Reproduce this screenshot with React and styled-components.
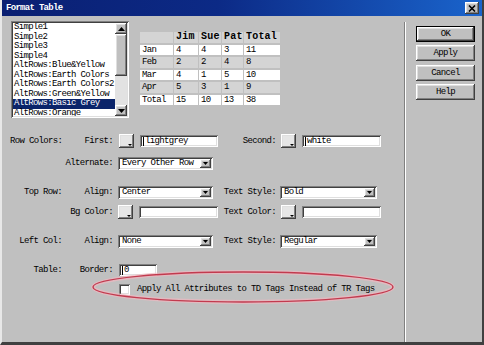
import React from 'react';
import styled, { createGlobalStyle, css } from 'styled-components';

const GlobalStyle = createGlobalStyle`
  html, body {
    margin: 0;
    padding: 0;
    background: #c0c0c0;
  }
  * {
    box-sizing: border-box;
  }
`;

const mono = css`
  font-family: "Liberation Mono", "DejaVu Sans Mono", monospace;
  font-size: 9px;
  letter-spacing: -0.65px;
  color: #000;
`;

const raised = css`
  background: #c0c0c0;
  box-shadow: inset -1px -1px #404040, inset 1px 1px #ffffff,
    inset -2px -2px #808080, inset 2px 2px #dfdfdf;
`;

const sunken = css`
  background: #ffffff;
  box-shadow: inset 1px 1px #808080, inset -1px -1px #ffffff,
    inset 2px 2px #404040, inset -2px -2px #dfdfdf;
`;

const Window = styled.div`
  position: relative;
  width: 484px;
  height: 345px;
  background: #c0c0c0;
  border-left: 2px solid #e8e8e8;
  border-right: 2px solid #404040;
  border-bottom: 3px solid #404040;
  display: flex;
  flex-direction: column;
  ${mono};
`;

const TitleBar = styled.div`
  height: 16px;
  flex: none;
  display: flex;
  align-items: center;
  justify-content: space-between;
  padding: 0 3px 0 4px;
  background: linear-gradient(to right, #0a1f72 0%, #0c2a86 45%, #1a64cc 100%);
`;

const Title = styled.span`
  ${mono};
  color: #fff;
  font-weight: bold;
  letter-spacing: -0.7px;
`;

const CloseBtn = styled.div`
  ${raised};
  width: 14px;
  height: 12px;
  display: flex;
  align-items: center;
  justify-content: center;
`;

const Body = styled.div`
  flex: 1;
  display: flex;
`;

const Main = styled.div`
  width: 402px;
  flex: none;
  padding: 5px 0 0 9px;
  display: flex;
  flex-direction: column;
`;

const Divider = styled.div`
  width: 2px;
  margin: 6px 0 0;
  border-left: 1px solid #808080;
  border-right: 1px solid #ffffff;
`;

const Side = styled.div`
  flex: 1;
  padding: 10px 0 0 10px;
  display: flex;
  flex-direction: column;
  gap: 3.3px;
`;

const Button = styled.div`
  ${raised};
  width: 59px;
  height: 16px;
  display: flex;
  align-items: center;
  justify-content: center;
  ${props => props.$default && css`
    border: 1px solid #000;
  `}
`;

const Top = styled.div`
  display: flex;
  gap: 10px;
`;

const ListBox = styled.div`
  ${sunken};
  width: 118px;
  height: 97px;
  padding: 2px;
  display: flex;
`;

const Items = styled.div`
  flex: 1;
  overflow: hidden;
`;

const Item = styled.div`
  height: 9.5px;
  line-height: 9.5px;
  padding-left: 1px;
  white-space: nowrap;
  ${props => props.$selected && css`
    background: #0a246a;
    color: #fff;
  `}
`;

const ScrollBar = styled.div`
  width: 12px;
  display: flex;
  flex-direction: column;
`;

const ScrollBtn = styled.div`
  ${raised};
  height: 11px;
  flex: none;
  display: flex;
  align-items: center;
  justify-content: center;
`;

const Thumb = styled.div`
  ${raised};
  height: 42px;
  flex: none;
`;

const Track = styled.div`
  flex: 1;
  background: #e2e2e2;
`;

const Preview = styled.table`
  margin-top: 9px;
  border-collapse: separate;
  border-spacing: 1px 2px;
  align-self: flex-start;
`;

const Cell = styled.td`
  ${mono};
  height: 10.5px;
  padding: 0 0 0 2px;
  line-height: 10px;
  width: ${props => props.$w}px;
  background: ${props => props.$bg};
  ${props => props.$head && css`
    font-weight: bold;
    font-size: 10px;
    letter-spacing: 0.2px;
  `}
`;

const Form = styled.div`
  margin-left: -1px;
  margin-top: 1px;
  display: flex;
  flex-direction: column;
`;

const Row = styled.div`
  height: 14px;
  margin-top: ${props => props.$gap}px;
  display: flex;
  align-items: center;
`;

const Label = styled.div`
  width: ${props => props.$w}px;
  flex: none;
  text-align: right;
  white-space: nowrap;
`;

const Slot = styled.div`
  width: ${props => props.$w}px;
  flex: none;
  margin-left: ${props => props.$ml || 0}px;
  display: flex;
  align-items: center;
  gap: 6px;
`;

const Swatch = styled.div`
  ${raised};
  background: #e6e6e6;
  width: 15px;
  height: 14px;
  flex: none;
  position: relative;
  &::after {
    content: '';
    position: absolute;
    right: 2px;
    bottom: 2px;
    border-left: 2px solid transparent;
    border-right: 2px solid transparent;
    border-top: 2px solid #000;
  }
`;

const TextBox = styled.div`
  ${sunken};
  width: ${props => props.$w}px;
  height: 12px;
  padding: 0 3px;
  display: flex;
  align-items: center;
  white-space: nowrap;
`;

const Caret = styled.span`
  display: inline-block;
  width: 1px;
  height: 9px;
  background: #000;
  margin-right: 1px;
`;

const SelectBox = styled.div`
  ${sunken};
  width: ${props => props.$w}px;
  height: 13px;
  padding: 2px 2px 2px 4px;
  display: flex;
  align-items: center;
  justify-content: space-between;
  white-space: nowrap;
`;

const DropBtn = styled.div`
  ${raised};
  width: 11px;
  height: 9px;
  display: flex;
  align-items: center;
  justify-content: center;
`;

const CheckBox = styled.div`
  ${sunken};
  width: 11px;
  height: 11px;
  flex: none;
`;

const CheckLabel = styled.span`
  margin-left: 1px;
  white-space: nowrap;
`;

const Annotation = styled.svg`
  position: absolute;
  left: -2px;
  top: 0;
  pointer-events: none;
`;

const Arrow = ({ up }) => (
  <svg width="7" height="4" viewBox="0 0 7 4">
    <polygon points={up ? '3.5,0 7,4 0,4' : '0,0 7,0 3.5,4'} fill="#000" />
  </svg>
);

const Select = ({ w, value }) => (
  <SelectBox $w={w}>
    <span>{value}</span>
    <DropBtn>
      <svg width="5" height="3" viewBox="0 0 5 3">
        <polygon points="0,0 5,0 2.5,3" fill="#000" />
      </svg>
    </DropBtn>
  </SelectBox>
);

const styles = [
  'Simple1', 'Simple2', 'Simple3', 'Simple4', 'AltRows:Blue&Yellow',
  'AltRows:Earth Colors', 'AltRows:Earth Colors2', 'AltRows:Green&Yellow',
  'AltRows:Basic Grey', 'AltRows:Orange',
];

const widths = [33, 24, 22, 21, 36];
const tableRows = [
  ['', 'Jim', 'Sue', 'Pat', 'Total'],
  ['Jan', '4', '4', '3', '11'],
  ['Feb', '2', '2', '4', '8'],
  ['Mar', '4', '1', '5', '10'],
  ['Apr', '5', '3', '1', '9'],
  ['Total', '15', '10', '13', '38'],
];

export default function App() {
  return (
    <>
      <GlobalStyle />
      <Window>
        <TitleBar>
          <Title>Format Table</Title>
          <CloseBtn>
            <svg width="8" height="7" viewBox="0 0 8 7">
              <path d="M1 0.5 L7 6.5 M7 0.5 L1 6.5" stroke="#000" strokeWidth="1.6" />
            </svg>
          </CloseBtn>
        </TitleBar>
        <Body>
          <Main>
            <Top>
              <ListBox>
                <Items>
                  {styles.map(s => (
                    <Item key={s} $selected={s === 'AltRows:Basic Grey'}>{s}</Item>
                  ))}
                </Items>
                <ScrollBar>
                  <ScrollBtn><Arrow up /></ScrollBtn>
                  <Thumb />
                  <Track />
                  <ScrollBtn><Arrow /></ScrollBtn>
                </ScrollBar>
              </ListBox>
              <Preview>
                <tbody>
                  {tableRows.map((r, i) => (
                    <tr key={i}>
                      {r.map((c, j) => (
                        <Cell
                          key={j}
                          $w={widths[j]}
                          $head={i === 0}
                          $bg={i === 0 || i % 2 === 0 ? '#d4d4d4' : '#ffffff'}
                        >
                          {c}
                        </Cell>
                      ))}
                    </tr>
                  ))}
                </tbody>
              </Preview>
            </Top>
            <Form>
              <Row $gap={15}>
                <Label $w={52}>Row Colors:</Label>
                <Label $w={51}>First:</Label>
                <Slot $w={100} $ml={6}>
                  <Swatch />
                  <TextBox $w={78}><Caret />lightgrey</TextBox>
                </Slot>
                <Label $w={57}>Second:</Label>
                <Slot $w={100} $ml={5}>
                  <Swatch />
                  <TextBox $w={79}><Caret />white</TextBox>
                </Slot>
              </Row>
              <Row $gap={8}>
                <Label $w={52} />
                <Label $w={51}>Alternate:</Label>
                <Slot $w={100} $ml={5}>
                  <Select w={95} value="Every Other Row" />
                </Slot>
              </Row>
              <Row $gap={15}>
                <Label $w={52}>Top Row:</Label>
                <Label $w={51}>Align:</Label>
                <Slot $w={100} $ml={5}>
                  <Select w={95} value="Center" />
                </Slot>
                <Label $w={58}>Text Style:</Label>
                <Slot $w={100} $ml={4}>
                  <Select w={97} value="Bold" />
                </Slot>
              </Row>
              <Row $gap={6}>
                <Label $w={52} />
                <Label $w={51}>Bg Color:</Label>
                <Slot $w={100} $ml={5}>
                  <Swatch />
                  <TextBox $w={79} />
                </Slot>
                <Label $w={58}>Text Color:</Label>
                <Slot $w={100} $ml={5}>
                  <Swatch />
                  <TextBox $w={79} />
                </Slot>
              </Row>
              <Row $gap={15}>
                <Label $w={52}>Left Col:</Label>
                <Label $w={51}>Align:</Label>
                <Slot $w={100} $ml={5}>
                  <Select w={95} value="None" />
                </Slot>
                <Label $w={58}>Text Style:</Label>
                <Slot $w={100} $ml={4}>
                  <Select w={97} value="Regular" />
                </Slot>
              </Row>
              <Row $gap={15}>
                <Label $w={52}>Table:</Label>
                <Label $w={51}>Border:</Label>
                <Slot $w={100} $ml={6}>
                  <TextBox $w={38}><Caret />0</TextBox>
                </Slot>
              </Row>
              <Row $gap={5}>
                <Label $w={52} />
                <Label $w={51} />
                <Slot $w={280} $ml={6}>
                  <CheckBox />
                  <CheckLabel>Apply All Attributes to TD Tags Instead of TR Tags</CheckLabel>
                </Slot>
              </Row>
            </Form>
          </Main>
          <Divider />
          <Side>
            <Button $default>OK</Button>
            <Button>Apply</Button>
            <Button>Cancel</Button>
            <Button>Help</Button>
          </Side>
        </Body>
        <Annotation width="484" height="345" viewBox="0 0 484 345">
          <ellipse cx="243" cy="287" rx="150" ry="15" fill="none" stroke="#f0b8c0" strokeWidth="4" opacity="0.7" />
          <ellipse cx="243" cy="287" rx="150" ry="15" fill="none" stroke="#c23a4e" strokeWidth="1.4" />
        </Annotation>
      </Window>
    </>
  );
}
